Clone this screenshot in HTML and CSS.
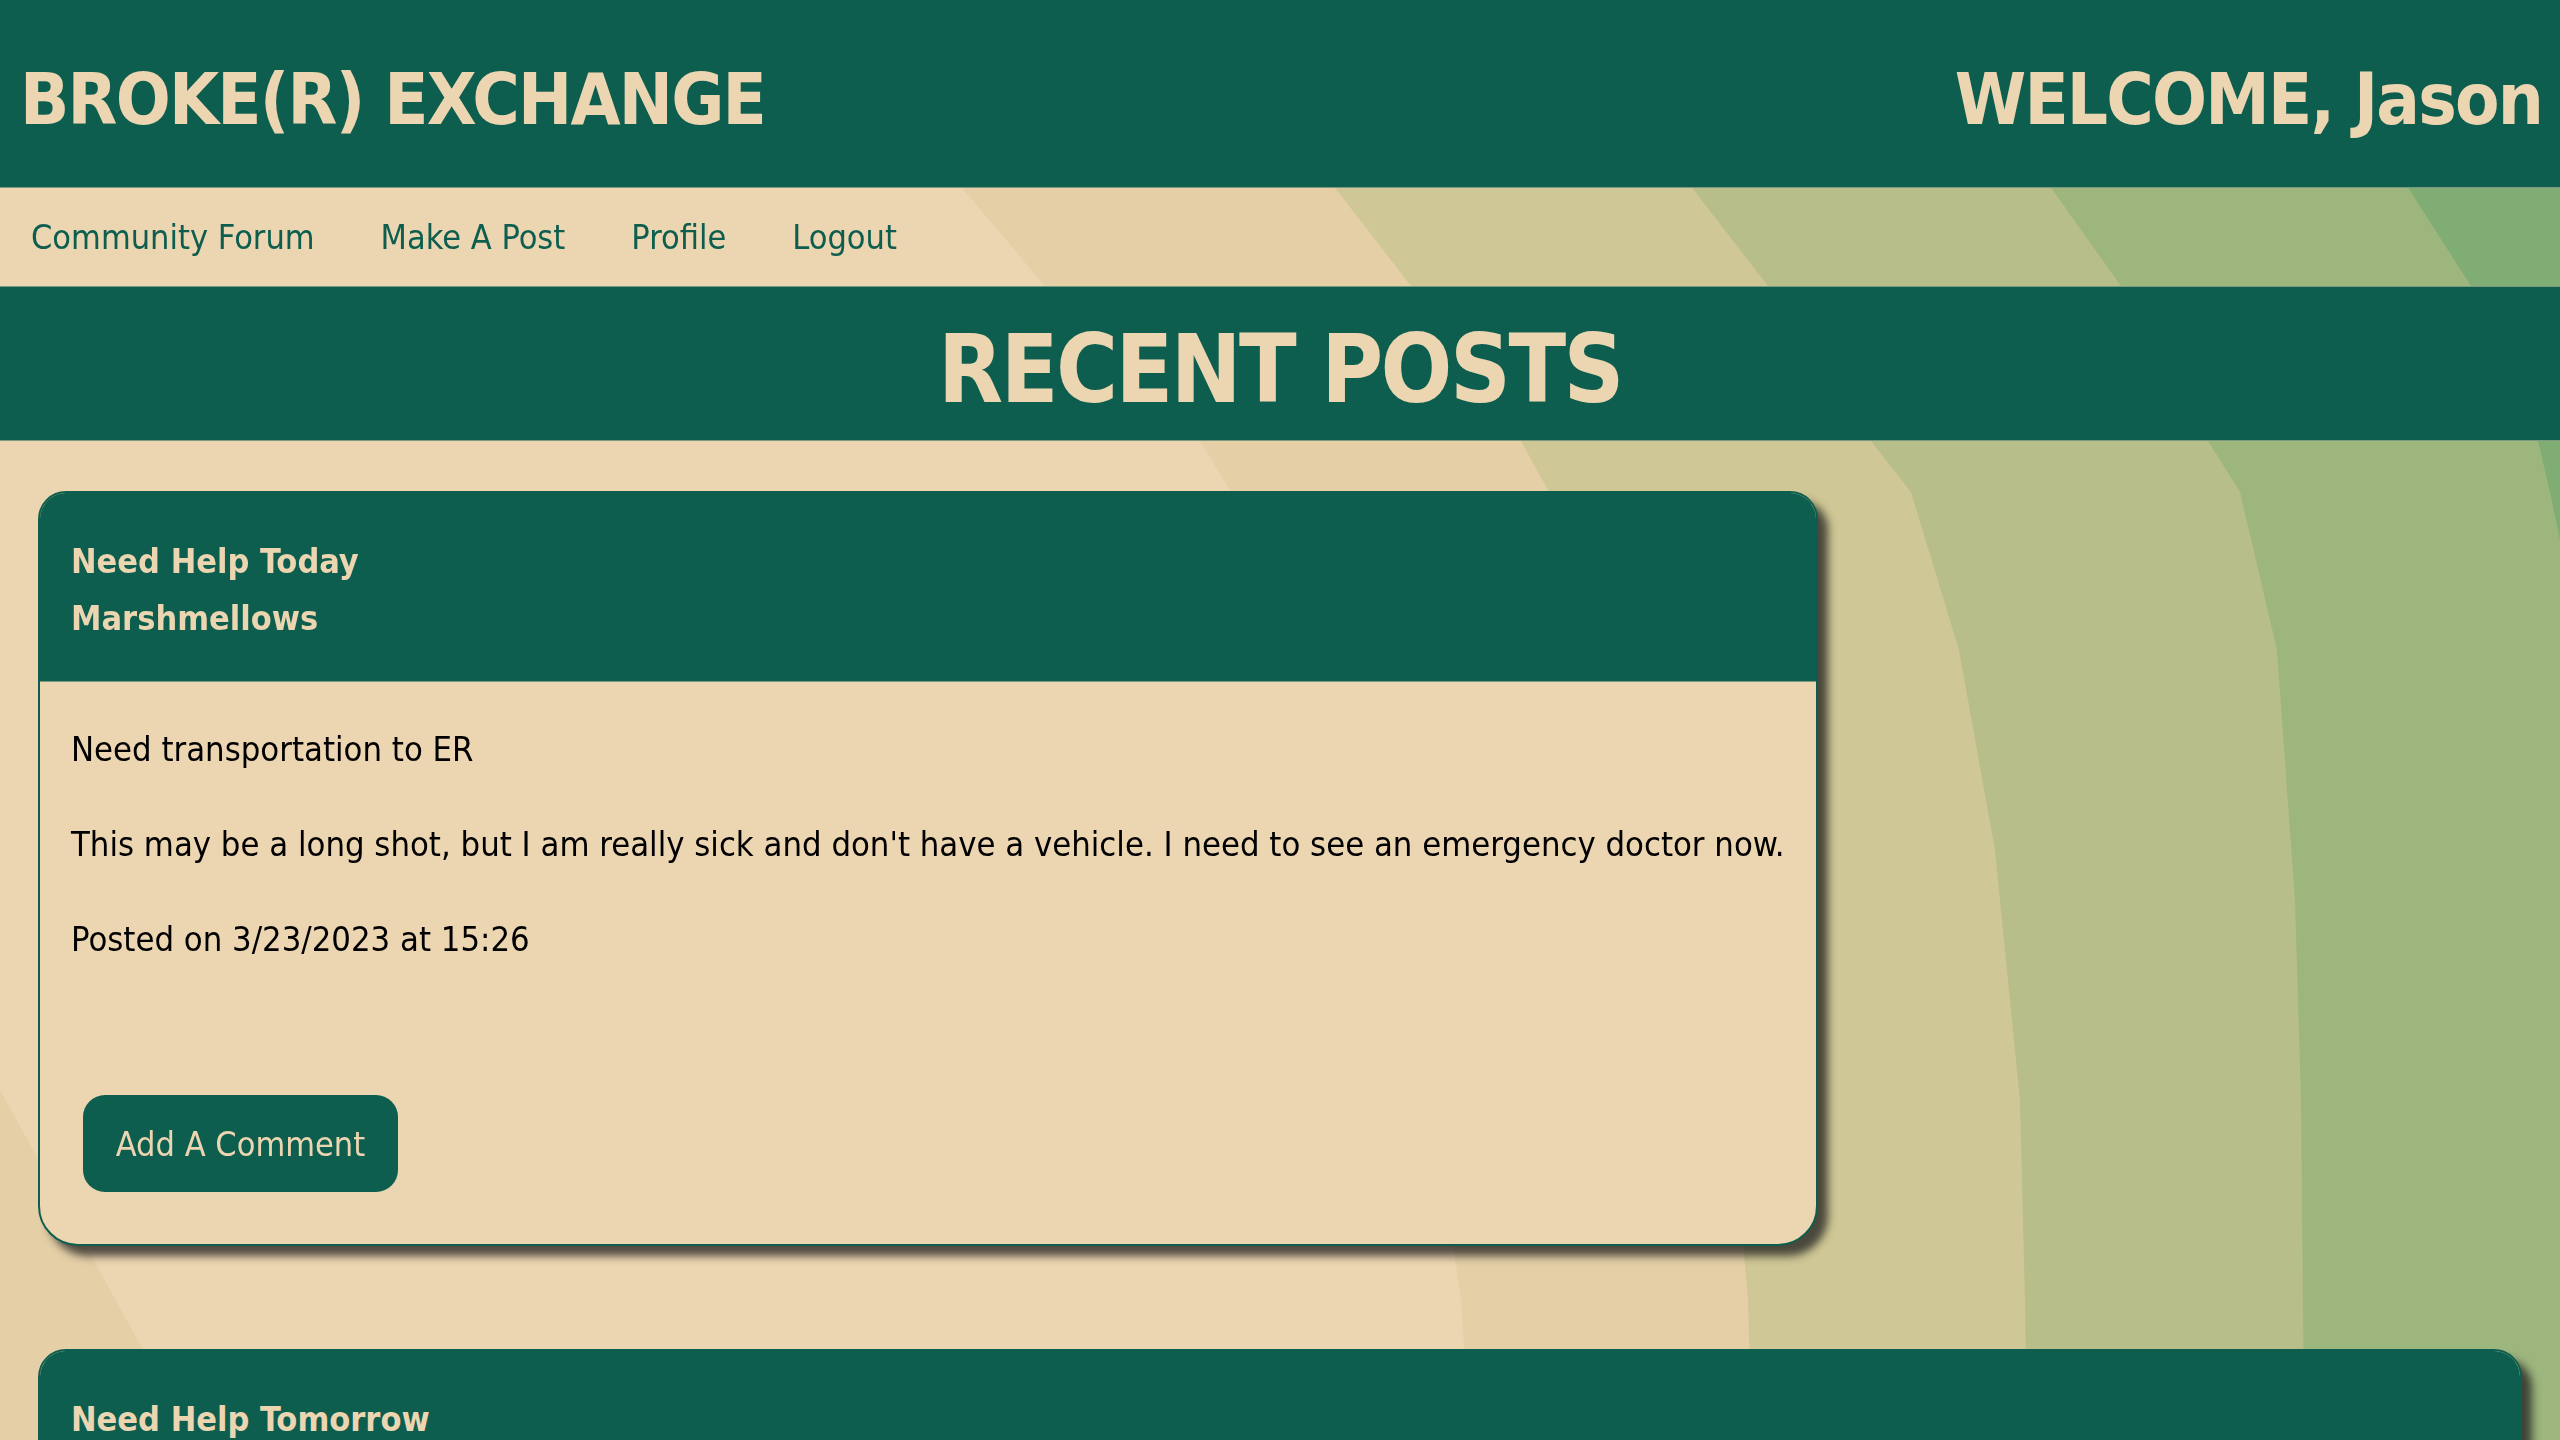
FILE: index.html
```html
<!DOCTYPE html>
<html lang="en">
<head>
<meta charset="utf-8">
<title>Broke(r) Exchange</title>
<link rel="stylesheet" href="styles.css">
</head>
<body>
<svg class="bg-waves" viewBox="0 0 2560 1440" preserveAspectRatio="none" aria-hidden="true">
  <rect width="2560" height="1440" fill="#ECD5B1"/>
  <path fill="#E4CFA6" d="M800,0 L880,95 L963,189 L1045,286 L1125,365 L1200,441 L1260,540 L1320,680 L1380,860 L1425,1050 L1461,1300 L1470,1440 L2560,1440 L2560,0 Z"/>
  <path fill="#E4CFA6" d="M0,1090 L143,1350 L193,1440 L0,1440 Z"/>
  <path fill="#CFC795" d="M1180,0 L1260,95 L1336,189 L1411,286 L1470,365 L1521,441 L1549,492 L1600,600 L1660,800 L1710,1000 L1735,1150 L1748,1300 L1752,1440 L2560,1440 L2560,0 Z"/>
  <path fill="#B7BE89" d="M1540,0 L1615,95 L1693,189 L1768,286 L1825,365 L1871,441 L1911,492 L1959,650 L1995,850 L2020,1100 L2025,1300 L2027,1440 L2560,1440 L2560,0 Z"/>
  <path fill="#9DB67E" d="M1900,0 L1975,95 L2052,189 L2121,286 L2170,365 L2208,441 L2240,492 L2277,650 L2295,900 L2301,1100 L2303,1300 L2304,1440 L2560,1440 L2560,0 Z"/>
  <path fill="#80AD74" d="M2260,0 L2335,95 L2409,189 L2471,286 L2510,365 L2538,441 L2550,492 L2560,540 L2560,0 Z"/>
</svg>

<header class="site-header">
  <h1 class="brand">BROKE(R) EXCHANGE</h1>
  <h1 class="welcome">WELCOME, Jason</h1>
</header>

<nav class="site-nav">
  <a href="#">Community Forum</a>
  <a href="#">Make A Post</a>
  <a href="#">Profile</a>
  <a href="#">Logout</a>
</nav>

<section class="page-title">
  <h2>RECENT POSTS</h2>
</section>

<main class="posts">
  <article class="post-card">
    <div class="post-head">
      <h3 class="post-title">Need Help Today</h3>
      <p class="post-user">Marshmellows</p>
    </div>
    <div class="post-body">
      <p>Need transportation to ER</p>
      <p>This may be a long shot, but I am really sick and don't have a vehicle. I need to see an emergency doctor now.</p>
      <p>Posted on 3/23/2023 at 15:26</p>
      <div class="post-actions">
        <button class="btn" type="button">Add A Comment</button>
      </div>
    </div>
  </article>

  <article class="post-card">
    <div class="post-head">
      <h3 class="post-title">Need Help Tomorrow</h3>
      <p class="post-user">Marshmellows</p>
    </div>
    <div class="post-body">
      <p>Need a ride to a job interview</p>
      <p>My car broke down last night and I have a job interview across town tomorrow morning at 9am. If anyone is headed that way and could give me a ride, I would be extremely grateful and happy to chip in for gas.</p>
      <p>Posted on 3/23/2023 at 16:02</p>
      <div class="post-actions">
        <button class="btn" type="button">Add A Comment</button>
      </div>
    </div>
  </article>
</main>
</body>
</html>
```

FILE: styles.css
```css
html {
  background: #ECD5B1;
}

body {
  margin: 0;
  font-family: "DejaVu Sans Condensed", "DejaVu Sans", sans-serif;
  color: #000;
}

.bg-waves {
  position: fixed;
  inset: 0;
  width: 100%;
  height: 100%;
  z-index: -1;
  display: block;
}

.site-header {
  display: flex;
  justify-content: space-between;
  align-items: center;
  height: 188px;
  box-sizing: border-box;
  padding: 12px 18px 0 20px;
  background: #0D5E4E;
  color: #ECD5B1;
  border-bottom: 1px solid #7C9A80;
}

.brand,
.welcome {
  margin: 0;
  font-size: 72px;
  font-weight: bold;
  letter-spacing: -1.8px;
  line-height: 1.2;
}

.site-nav {
  display: flex;
  align-items: center;
  gap: 66px;
  height: 98px;
  box-sizing: border-box;
  padding: 0 31px;
}

.site-nav a {
  color: #0D5E4E;
  text-decoration: none;
  font-size: 34px;
}

.page-title {
  display: flex;
  align-items: center;
  justify-content: center;
  height: 155px;
  box-sizing: border-box;
  padding-top: 14px;
  background: #0D5E4E;
  border-top: 1px solid #7C9A80;
  border-bottom: 1px solid #7C9A80;
}

.page-title h2 {
  margin: 0;
  font-size: 94px;
  font-weight: bold;
  letter-spacing: -2.5px;
  color: #ECD5B1;
  line-height: 1.2;
}

.posts {
  display: flex;
  flex-direction: column;
  align-items: flex-start;
  gap: 103px;
  padding: 50px 38px 80px;
}

.post-card {
  max-width: 100%;
  box-sizing: border-box;
  background: #ECD5B1;
  border: 2px solid #0D5E4E;
  border-radius: 28px 28px 40px 40px;
  box-shadow: 10px 10px 8px rgba(30, 30, 30, 0.75);
  overflow: hidden;
}

.post-head {
  background: #0D5E4E;
  color: #ECD5B1;
  padding: 40px 31px 34px;
  border-bottom: 1px solid #7C9A80;
}

.post-title,
.post-user {
  margin: 0;
  font-size: 34px;
  font-weight: bold;
  line-height: 57px;
}

.post-body {
  padding: 47px 31px 52px;
}

.post-body p {
  margin: 0;
  font-size: 34.3px;
  line-height: 40px;
}

.post-body p + p {
  margin-top: 55px;
}

.post-actions {
  margin-top: 136px;
  padding-left: 12px;
}

.btn {
  width: 315px;
  height: 97px;
  border: none;
  border-radius: 22px;
  background: #0D5E4E;
  color: #ECD5B1;
  font-family: inherit;
  font-size: 34px;
  cursor: pointer;
}
```
